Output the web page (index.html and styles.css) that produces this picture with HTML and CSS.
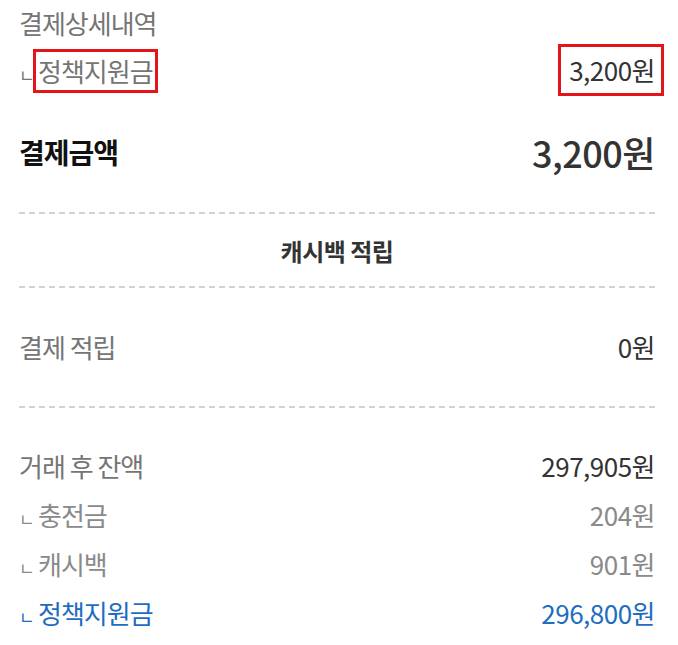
FILE: index.html
```html
<!doctype html>
<html>
	<head>
		<meta charset="utf-8">
		<link rel="stylesheet" href="styles.css">
	</head>
	<body>
		<div class="receipt">
			<div class="title">결제상세내역</div>
			<div class="row detail">
				<span class="sub"><span class="mark">ㄴ</span><span class="boxed">정책지원금</span></span>
				<span class="boxed value">3,200원</span>
			</div>

			<div class="row total">
				<span>결제금액</span>
				<span class="total-value">3,200원</span>
			</div>

			<div class="dash"></div>
			<div class="section-title">캐시백 적립</div>
			<div class="dash"></div>

			<div class="earn">
				<div class="row">
					<span class="label">결제 적립</span>
					<span class="value">0원</span>
				</div>
			</div>

			<div class="dash"></div>

			<div class="balance">
				<div class="row">
					<span class="label">거래 후 잔액</span>
					<span class="value">297,905원</span>
				</div>
				<div class="row muted">
					<span class="sub"><span class="mark">ㄴ</span><span class="plain">충전금</span></span>
					<span class="value">204원</span>
				</div>
				<div class="row muted">
					<span class="sub"><span class="mark">ㄴ</span><span class="plain">캐시백</span></span>
					<span class="value">901원</span>
				</div>
				<div class="row blue">
					<span class="sub"><span class="mark">ㄴ</span><span class="plain">정책지원금</span></span>
					<span class="value">296,800원</span>
				</div>
			</div>
		</div>
	</body>
</html>
```

FILE: styles.css
```css
body, html {
	margin: 0;
	padding: 0;
	background: #fff;
	font-family: "Noto Sans CJK KR", "Noto Sans", sans-serif;
}

.receipt {
	padding: 0 23px 0 19px;
	font-size: 26px;
	color: #757575;
	letter-spacing: -1px;
}

.title {
	height: 44px;
	display: flex;
	align-items: center;
}

.row {
	display: flex;
	justify-content: space-between;
	align-items: center;
	height: 49px;
}

.detail {
	height: 52px;
}

.mark {
	display: inline-block;
	width: 14px;
	font-size: 17px;
	letter-spacing: 0;
}

.boxed, .plain {
	border: 3px solid #e4141b;
	padding: 0 2px 1px 2px;
}

.plain {
	border-color: transparent;
}

.value {
	color: #333;
	letter-spacing: -0.5px;
}

.detail .value {
	padding: 4px 6px 5px 8px;
	margin-right: -9px;
}

.total {
	height: 112px;
	margin-bottom: 4px;
	color: #111;
	font-weight: bold;
	font-size: 28px;
}

.total-value {
	font-weight: 500;
	font-size: 36px;
	color: #333;
	letter-spacing: -0.5px;
}

.dash {
	height: 2px;
	background: repeating-linear-gradient(to right, #d2d2d2 0 6px, transparent 6px 10px);
}

.section-title {
	height: 72px;
	display: flex;
	align-items: center;
	justify-content: center;
	font-size: 24px;
	font-weight: bold;
	color: #333;
	letter-spacing: -0.5px;
}

.earn {
	padding: 34px 0 35px;
}

.balance {
	padding-top: 33px;
}

.muted {
	color: #8a8a8a;
}

.muted .value {
	color: #8a8a8a;
}

.blue, .blue .value {
	color: #1e6dc1;
}
```
